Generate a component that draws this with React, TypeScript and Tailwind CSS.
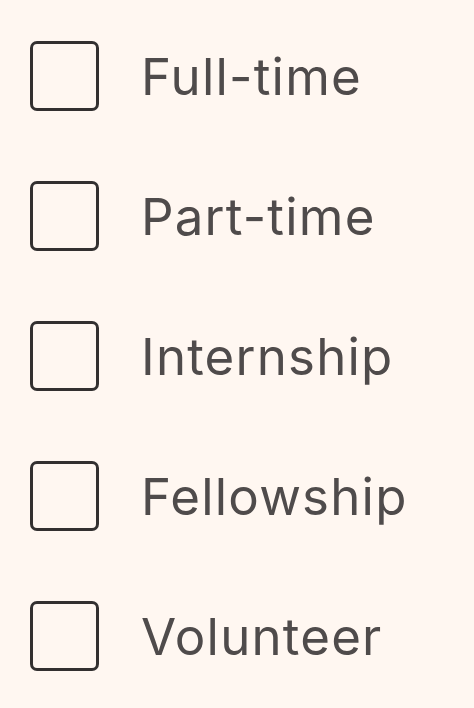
import React from "react";

const items = ["Full-time", "Part-time", "Internship", "Fellowship", "Volunteer"];

export default function App() {
  return (
    <div className="w-[474px] h-[708px] bg-[#fff7f1] pt-[41px] pl-[30px] flex flex-col gap-[70px]" style={{ fontFamily: "Inter, 'Noto Sans', sans-serif" }}>
      {items.map((t) => (
        <label key={t} className="flex items-center h-[70px]">
          <span className="w-[69px] h-[70px] border-[3px] border-[#333030] rounded-[7px] shrink-0" />
          <span className="ml-[42px] text-[51px] leading-none text-[#4f4b4b] tracking-[1.2px]">{t}</span>
        </label>
      ))}
    </div>
  );
}
